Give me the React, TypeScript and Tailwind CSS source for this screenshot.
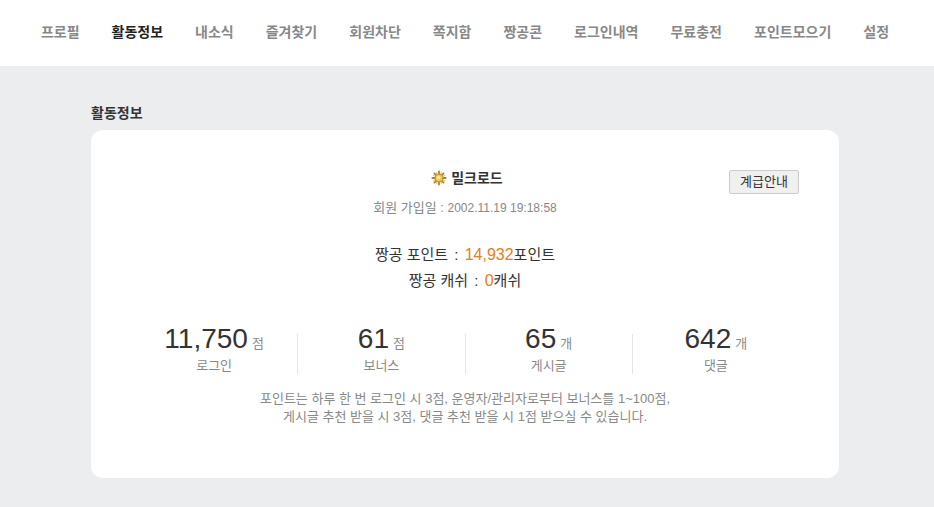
import React from "react";

const menus = [
  "프로필",
  "활동정보",
  "내소식",
  "즐겨찾기",
  "회원차단",
  "쪽지함",
  "짱공콘",
  "로그인내역",
  "무료충전",
  "포인트모으기",
  "설정",
];

interface Stat {
  label: string;
  value: string;
  unit: string;
}

const stats: Stat[] = [
  { label: "로그인", value: "11,750", unit: "점" },
  { label: "보너스", value: "61", unit: "점" },
  { label: "게시글", value: "65", unit: "개" },
  { label: "댓글", value: "642", unit: "개" },
];

interface PointRowProps {
  name: string;
  amount: string;
  unit: string;
}

function SunIcon() {
  return (
    <svg width="16" height="16" viewBox="0 0 16 16" aria-hidden="true">
      {/* Rays */}
      <g stroke="#a98432" strokeWidth="1.8" strokeLinecap="round">
        <path d="M8 1.4V14.6M1.4 8H14.6M3.4 3.4L12.6 12.6M12.6 3.4L3.4 12.6" />
      </g>
      <g stroke="#d9b04a" strokeWidth="1" strokeLinecap="round">
        <path d="M5.6 2.6L10.4 13.4M10.4 2.6L5.6 13.4M2.6 5.6L13.4 10.4M13.4 5.6L2.6 10.4" />
      </g>
      <circle cx="8" cy="8" r="4.3" fill="#c8962e" />
      <circle cx="8" cy="8" r="3.3" fill="#edc65a" />
      <circle cx="7.6" cy="7.6" r="1.9" fill="#fbeaa8" />
    </svg>
  );
}

function PointRow({ name, amount, unit }: PointRowProps) {
  return (
    <p>
      {name} <span className="px-0.5">:</span>{" "}
      <span className="text-base leading-[26px] text-[#e67e22]">{amount}</span>
      {unit}
    </p>
  );
}

function StatItem({ stat }: { stat: Stat }) {
  return (
    <li className="flex h-10 flex-1 flex-col items-center justify-end border-r border-[#e5e5e5] last:border-r-0">
      <p className="flex items-baseline gap-1 leading-7">
        <strong className="text-[28px] font-normal text-[#333]">{stat.value}</strong>
        <span className="text-[13px] text-[#888]">{stat.unit}</span>
      </p>
      <span className="text-[13px] leading-4 text-[#888]">{stat.label}</span>
    </li>
  );
}

export default function App() {
  return (
    <div className="min-h-screen bg-[#ecedef] font-['Liberation_Sans','Noto_Sans_CJK_KR',sans-serif] text-[#333]">
      {/* Menu */}
      <nav className="bg-white font-['Noto_Sans_CJK_KR',sans-serif]">
        <ul className="flex h-[66px] items-center justify-center gap-8 pr-1 pb-1 text-sm font-bold whitespace-nowrap">
          {menus.map((menu) => (
            <li key={menu}>
              <a href="#" className={menu === "활동정보" ? "text-[#222]" : "text-[#888]"}>
                {menu}
              </a>
            </li>
          ))}
        </ul>
      </nav>

      <main className="pt-9 pr-[95px] pb-7 pl-[91px]">
        <h2 className="pb-2 font-['Noto_Sans_CJK_KR',sans-serif] text-sm leading-5 font-bold">활동정보</h2>

        <section className="rounded-xl bg-white px-10 pt-10 pb-[52px]">
          {/* Member */}
          <div className="grid grid-cols-[1fr_auto_1fr] items-start">
            <div className="col-start-2 text-center">
              <h3 className="flex items-center justify-center gap-1 pl-1 text-sm leading-4 font-bold">
                <SunIcon />
                밀크로드
              </h3>
              <p className="mt-[14px] text-[13px] leading-4 text-[#888]">
                회원 가입일 : <span className="text-xs">2002.11.19 19:18:58</span>
              </p>
            </div>
            <button
              type="button"
              className="h-6 w-[70px] justify-self-end rounded-xs border border-[#ccc] bg-[#f0f0f0] text-[13px] leading-5"
            >
              계급안내
            </button>
          </div>

          {/* Points */}
          <div className="mt-[26px] text-center text-[15px] leading-[26px]">
            <PointRow name="짱공 포인트" amount="14,932" unit="포인트" />
            <PointRow name="짱공 캐쉬" amount="0" unit="캐쉬" />
          </div>

          <ul className="mt-10 flex">
            {stats.map((stat) => (
              <StatItem key={stat.label} stat={stat} />
            ))}
          </ul>

          <p className="mt-4 text-center text-[13px] leading-[18px] text-[#888]">
            포인트는 하루 한 번 로그인 시 3점, 운영자/관리자로부터 보너스를 1~100점,
            <br />
            게시글 추천 받을 시 3점, 댓글 추천 받을 시 1점 받으실 수 있습니다.
          </p>
        </section>
      </main>
    </div>
  );
}
